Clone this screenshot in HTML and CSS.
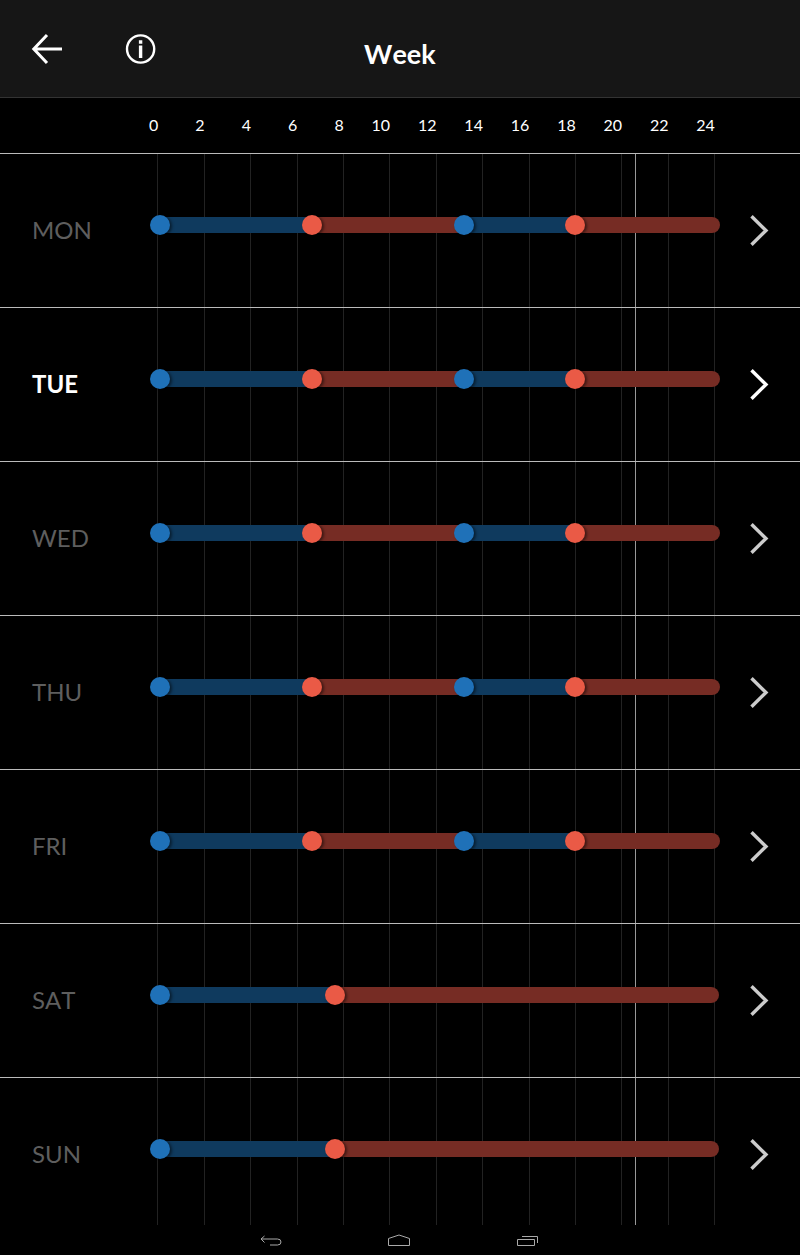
FILE: index.html
```html
<!DOCTYPE html>
<html lang="en">
  <head>
    <meta charset="utf-8" />
    <title>Week</title>
    <link rel="stylesheet" href="styles.css">
  </head>
  <body>
    <header class="header">
      <svg class="back" viewBox="0 0 32 32">
        <path d="M31 16H3M16 2L2.800 16L16 30" />
      </svg>
      <svg class="info" viewBox="0 0 32 32">
        <circle cx="15.600" cy="16" r="13.600" />
        <path d="M15.600 12.500V25M15.600 7.200V10.800" />
      </svg>
      <h1>Week</h1>
    </header>

    <div class="hours" id="hours"></div>

    <main class="week">
      <div class="grid" id="grid"></div>
      <div class="now"></div>
      <div id="days"></div>
    </main>

    <footer class="navbar">
      <svg viewBox="0 0 24 14">
        <path d="M5.500 2L2 5L5.500 8.500M2 5H18.500Q22 5 22 8Q22 11 18.500 11H11" />
      </svg>
      <svg viewBox="0 0 24 14">
        <path d="M1.500 11.500V4.500L12 1L22.500 4.500V11.500Z" />
      </svg>
      <svg viewBox="0 0 24 14">
        <path d="M2.500 5.500H19.500V11.500H2.500ZM7 2.500H22.500V9" />
      </svg>
    </footer>

    <script>
      // [type, start] in px from the left end of the bar
      const weekday = [["cool", 10], ["heat", 162], ["cool", 314], ["heat", 425]];
      const weekend = [["cool", 10], ["heat", 185]];
      const days = [
        { name: "MON", points: weekday, end: 570 },
        { name: "TUE", points: weekday, end: 570, today: true },
        { name: "WED", points: weekday, end: 570 },
        { name: "THU", points: weekday, end: 570 },
        { name: "FRI", points: weekday, end: 570 },
        { name: "SAT", points: weekend, end: 569 },
        { name: "SUN", points: weekend, end: 569 },
      ];

      // hour scale
      const hours = document.getElementById("hours");
      const grid = document.getElementById("grid");

      for (let h = 0; h <= 24; h += 2) {
        hours.innerHTML += `<span>${h}</span>`;
        grid.innerHTML += "<i></i>";
      }

      // day rows
      const segment = ([type, start], i, points, end) => {
        const next = points[i + 1] ? points[i + 1][1] : end;
        return `<div class="segment ${type}" style="width: ${next - start}px"><b></b></div>`;
      };

      document.getElementById("days").innerHTML = days
        .map(
          (day) => `
        <section class="day${day.today ? " today" : ""}">
          <h2>${day.name}</h2>
          <div class="bar">
            ${day.points.map((p, i) => segment(p, i, day.points, day.end)).join("")}
          </div>
          <svg class="chevron" viewBox="0 0 20 32">
            <path d="M1.500 2.300L16 16.500L1.500 30.700" />
          </svg>
        </section>`
        )
        .join("");
    </script>
  </body>
</html>
```
FILE: styles.css
```css
html,
body {
  margin: 0;
  padding: 0;
  font-family: Lato, sans-serif;
  font-kerning: none;
}

body {
  background: #000;
  color: #fff;
  width: 800px;
  height: 1255px;
  overflow: hidden;
}

svg {
  fill: none;
  stroke: #fff;
}

.header {
  display: grid;
  grid-template-columns: 94px 270px 1fr;
  align-items: center;
  box-sizing: border-box;
  height: 98px;
  padding-left: 31px;
  background: #161616;
  border-bottom: 1px solid #333;
}

.header svg {
  width: 32px;
  height: 32px;
  stroke-width: 3;
}

.header .info {
  stroke-width: 2.4;
}

.header .info path {
  stroke-width: 3.4;
}

.header h1 {
  margin: 10px 0 0 -31px;
  font-size: 27px;
  line-height: 32px;
  font-weight: bold;
}

.hours {
  display: flex;
  box-sizing: border-box;
  height: 56px;
  padding-left: 111.8px;
  border-bottom: 1px solid #bbb;
  font-size: 16px;
  line-height: 53px;
}

.hours span {
  width: 46.4px;
  flex-shrink: 0;
  text-align: right;
}

.week {
  position: relative;
  height: 1071px;
}

/* lines behind the rows */
.grid {
  position: absolute;
  top: 0;
  bottom: 0;
  left: 157.4px;
  width: 557.8px;
  display: flex;
  justify-content: space-between;
}

.grid i {
  width: 1px;
  background: #222;
}

.now {
  position: absolute;
  top: 0;
  bottom: 0;
  left: 635px;
  width: 1px;
  background: #999;
}

.day {
  position: relative;
  display: grid;
  grid-template-columns: 118px 600px 20px;
  box-sizing: border-box;
  height: 154px;
  padding-left: 32px;
  border-bottom: 1px solid #bbb;
  color: #5e5e5e;
}

.day:last-child {
  border-bottom: none;
}

.day h2 {
  margin: 61px 0 0;
  font-size: 24px;
  line-height: 30px;
  font-weight: normal;
}

.bar {
  display: flex;
  height: 16px;
  margin-top: 63px;
  padding-left: 10px;
}

.segment {
  display: flex;
  align-items: center;
}

.segment:last-child {
  border-radius: 0 8px 8px 0;
}

.segment b {
  position: relative;
  flex-shrink: 0;
  width: 20px;
  height: 20px;
  margin-left: -10px;
  border-radius: 50%;
  box-shadow: 2px 1px 3px rgba(0, 0, 0, 0.5);
}

.cool {
  background: #0f3a5e;
}

.cool b {
  background: #1f71b8;
}

.heat {
  background: #762c24;
}

.heat b {
  background: #ea5a46;
}

.chevron {
  width: 20px;
  height: 32px;
  margin-top: 60px;
  stroke: #ccc;
  stroke-width: 3.4;
}

.today {
  color: #fff;
}

.today h2 {
  font-weight: bold;
}

.today .chevron {
  stroke: #fff;
}

.navbar {
  display: flex;
  gap: 104px;
  padding: 9px 0 0 259px;
}

.navbar svg {
  width: 24px;
  height: 14px;
  stroke: #aaa;
}
```
